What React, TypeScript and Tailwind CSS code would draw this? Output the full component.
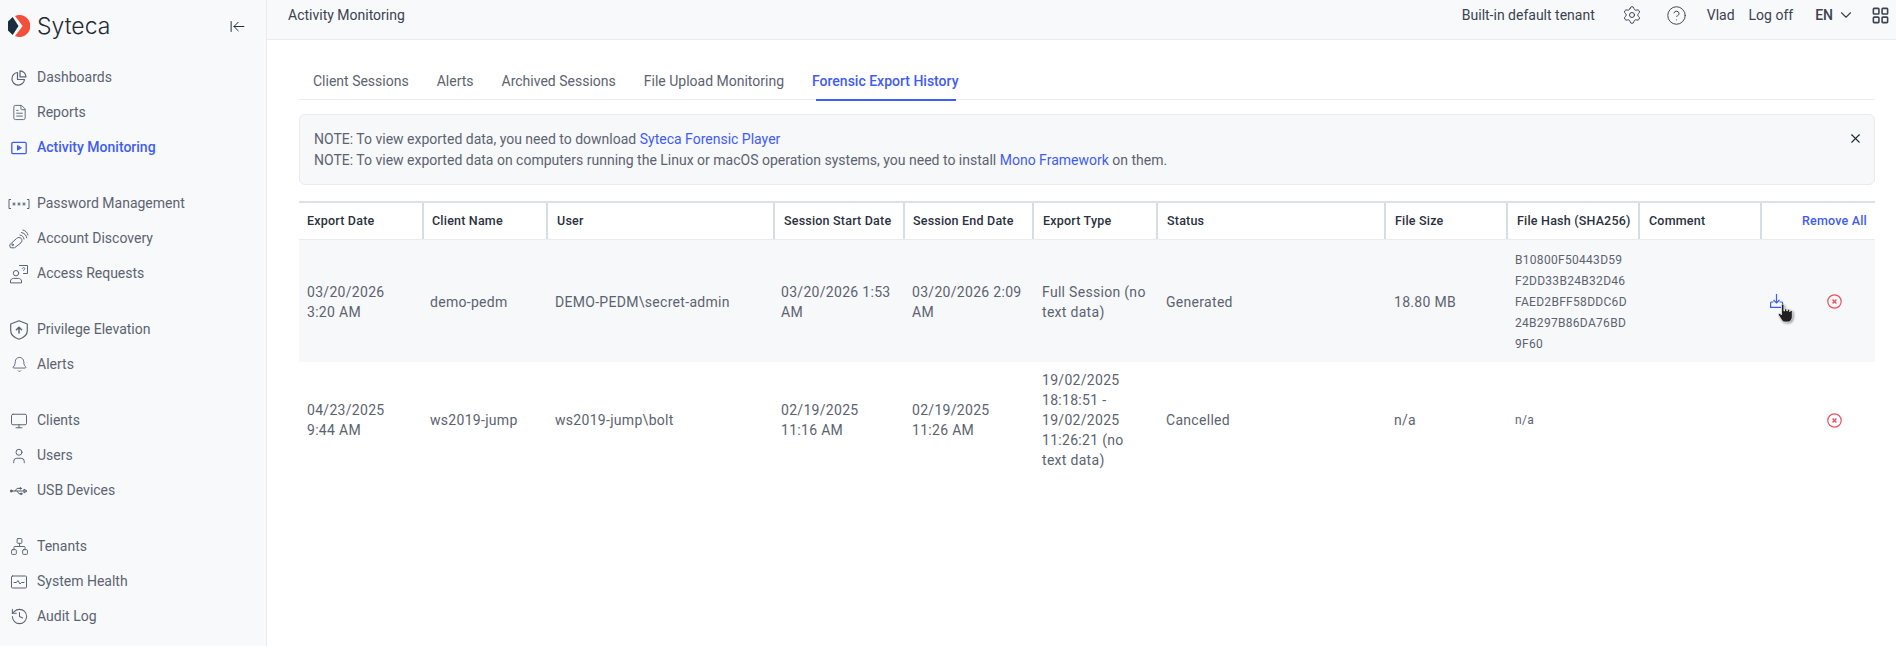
import {
  ArrowLeftToLine,
  Bell,
  ChevronDown,
  CircleHelp,
  FileText,
  History,
  LayoutGrid,
  Monitor,
  Network,
  Settings,
  User,
  X,
} from "lucide-react";
import type { ReactNode } from "react";

const FONT = "font-['Roboto',sans-serif]";

function Svg({ children }: { children: ReactNode }) {
  return (
    <svg width="20" height="20" viewBox="0 0 20 20" fill="none" stroke="currentColor" strokeWidth="1" strokeLinecap="round" strokeLinejoin="round">
      {children}
    </svg>
  );
}

const PieIcon = () => (
  <Svg>
    <path d="M8.500 4.500a6.300 6.300 0 1 0 7 7h-7z" strokeWidth="1.200" />
    <path d="M11 2.800a6.300 6.300 0 0 1 6 6h-6z" strokeWidth="1.200" />
  </Svg>
);

const PlayBox = () => (
  <Svg>
    <rect x="2.800" y="4.400" width="14.400" height="11.200" rx="1.200" strokeWidth="1.300" />
    <path d="M8.500 7.800v4.400l3.600-2.200z" fill="currentColor" />
  </Svg>
);

const PasswordIcon = () => (
  <svg width="22" height="20" viewBox="0 0 22 20" fill="none" stroke="currentColor" strokeWidth="1">
    <path d="M3 5.500H1v9h2M19 5.500h2v9h-2" />
    <path d="M6 8.300v3.400M4.500 9.100l3 1.800M7.500 9.100l-3 1.800M11 8.300v3.400M9.500 9.100l3 1.800M12.500 9.100l-3 1.800M16 8.300v3.400M14.500 9.100l3 1.800M17.500 9.100l-3 1.800" strokeWidth="0.850" />
  </svg>
);

const KeySignal = () => (
  <Svg>
    <path d="M1 15.500L7.500 9.500c1.300-1.300 3.500-1.300 4.700-.1 1.100 1.200 1 3.200-.2 4.400l-6.500 5H2a1 1 0 0 1-1-1z" />
    <circle cx="3.600" cy="15.800" r=".8" />
    <path d="M11 6c2 .2 3.800 2 4 4M12.500 3.500c2.500.3 5 2.800 5.300 5.300M14 1c2.500.6 4.500 2.600 5 5" />
  </Svg>
);

const AccessRequest = () => (
  <Svg>
    <circle cx="7" cy="9.200" r="2.700" />
    <path d="M1.500 18.500v-1.500c0-1.500 1.500-2.600 3-2.600h5c1.500 0 3 1.100 3 2.600v1.500z" />
    <path d="M10.500 1.500h8v8h-4" />
    <path d="M13.300 4.300c.2-.9 2.500-1 2.500.3 0 1-1.300 1-1.300 2" strokeWidth="0.900" />
  </Svg>
);

const ShieldUp = () => (
  <Svg>
    <path d="M10 .800l8.300 3.200v6.500c0 4-3.800 7.300-8.300 8.700-4.500-1.400-8.300-4.700-8.300-8.700V4z" strokeWidth="1.200" />
    <path d="M10 13V7.200M7.400 9.700L10 7.200l2.600 2.500" strokeWidth="1.500" />
  </Svg>
);

const HealthBox = () => (
  <Svg>
    <rect x="2.500" y="4" width="15" height="12" rx="1" />
    <path d="M5 10.500h2.500l1.500-2 2 3.500 1.500-1.500H15" />
  </Svg>
);

const UsbIcon = () => (
  <Svg>
    <circle cx="2.300" cy="10" r="1" fill="currentColor" />
    <path d="M3 10h14M15.300 8.300L18 10l-2.700 1.700z" />
    <path d="M6 10l2-2.600h2.500M8 10l2 2.800h1.500" />
    <circle cx="11.500" cy="7.400" r=".8" fill="currentColor" />
    <circle cx="12.200" cy="12.800" r=".8" fill="currentColor" />
  </Svg>
);

const Ic = ({ children }: { children: ReactNode }) => <span className="flex w-[22px] shrink-0 justify-center">{children}</span>;

const groups: { label: string; icon: ReactNode; active?: boolean }[][] = [
  [
    { label: "Dashboards", icon: <PieIcon /> },
    { label: "Reports", icon: <FileText size={17} strokeWidth={1.3} /> },
    { label: "Activity Monitoring", icon: <PlayBox />, active: true },
  ],
  [
    { label: "Password Management", icon: <PasswordIcon /> },
    { label: "Account Discovery", icon: <KeySignal /> },
    { label: "Access Requests", icon: <AccessRequest /> },
  ],
  [
    { label: "Privilege Elevation", icon: <ShieldUp /> },
    { label: "Alerts", icon: <Bell size={17} strokeWidth={1.3} /> },
  ],
  [
    { label: "Clients", icon: <Monitor size={18} strokeWidth={1.3} /> },
    { label: "Users", icon: <User size={18} strokeWidth={1.3} /> },
    { label: "USB Devices", icon: <UsbIcon /> },
  ],
  [
    { label: "Tenants", icon: <Network size={19} strokeWidth={1.2} /> },
    { label: "System Health", icon: <HealthBox /> },
    { label: "Audit Log", icon: <History size={19} strokeWidth={1.3} /> },
  ],
];

function Sidebar() {
  return (
    <aside className="flex h-[646px] w-[267px] shrink-0 flex-col overflow-hidden border-r border-[#e9ebef] bg-[#f8f9fb]">
      <div className="flex h-[52px] items-center pl-[8px] pr-[20px]">
        <svg width="22" height="22" viewBox="0 0 22 22">
          <path d="M4.700 2L0 6.500v9L4.700 20l5.800-9z" fill="#1b2e40" />
          <path d="M7 .900A11 11 0 1 1 7 21.100L14.700 11z" fill="#f2503b" />
        </svg>
        <span className="ml-[7px] font-['Inter',sans-serif] text-[23px] font-light leading-none text-[#1f2a37]">Syteca</span>
        <ArrowLeftToLine size={17} strokeWidth={1.4} className="ml-auto text-[#1f2a37]" />
      </div>
      <nav className="mt-[8px] flex flex-col gap-[21px]">
        {groups.map((g, i) => (
          <ul key={i}>
            {g.map((it) => (
              <li
                key={it.label}
                className={`flex h-[35px] items-center gap-[7px] pl-[8px] text-[14px] ${it.active ? "font-medium text-[#3f5cf6]" : "text-[#5c6370]"}`}
              >
                <Ic>{it.icon}</Ic>
                {it.label}
              </li>
            ))}
          </ul>
        ))}
      </nav>
    </aside>
  );
}

function TopBar() {
  return (
    <header className="flex h-[40px] items-center border-b border-[#e9ebef] bg-[#f8f9fb] pb-[9px] pl-[21px] pr-[6px] text-[14px] text-[#3b4250]">
      <span>Activity Monitoring</span>
      <span className="ml-auto">Built-in default tenant</span>
      <Settings size={20} strokeWidth={1.2} className="ml-[27px]" />
      <CircleHelp size={21} strokeWidth={1.1} className="ml-[24px]" />
      <span className="ml-[20px]">Vlad</span>
      <span className="ml-[14px]">Log off</span>
      <span className="ml-[22px] font-medium">EN</span>
      <ChevronDown size={18} strokeWidth={1.5} className="ml-[4px]" />
      <LayoutGrid size={19} strokeWidth={2} className="ml-[16px]" />
    </header>
  );
}

const tabs = ["Client Sessions", "Alerts", "Archived Sessions", "File Upload Monitoring", "Forensic Export History"];

function Tabs() {
  return (
    <div className="flex h-[40px] items-start gap-[28px] border-b border-[#e9ebef] pl-[14px] text-[14px]">
      {tabs.map((t, i) => (
        <div key={t} className={`relative pt-[11px] ${i === 4 ? "font-medium text-[#3f5cf6]" : "text-[#5c6370]"}`}>
          {t}
          {i === 4 && <span className="absolute -bottom-[9px] left-[4px] right-[3px] h-[2px] bg-[#3f5cf6]" />}
        </div>
      ))}
    </div>
  );
}

function Note() {
  return (
    <div className="relative mt-[14px] h-[71px] rounded-[6px] border border-[#e9ebef] bg-[#f7f8fa] pl-[14px] pt-[14px] text-[14px] leading-[21px] text-[#5c6370]">
      <p>
        NOTE: To view exported data, you need to download <span className="text-[#3f5cf6]">Syteca Forensic Player</span>
      </p>
      <p>
        NOTE: To view exported data on computers running the Linux or macOS operation systems, you need to install{" "}
        <span className="text-[#3f5cf6]">Mono Framework</span> on them.
      </p>
      <X size={15} strokeWidth={1.8} className="absolute right-[11px] top-[16px] text-[#1f2a37]" />
    </div>
  );
}

const COLS = "grid grid-cols-[125px_124px_227px_130px_129px_124px_228px_122px_132px_122px_113px]";

const headers: [string, string][] = [
  ["Export Date", "pl-[8px]"],
  ["Client Name", "pl-[8px]"],
  ["User", "pl-[9px]"],
  ["Session Start Date", "pl-[9px]"],
  ["Session End Date", "pl-[8px]"],
  ["Export Type", "pl-[9px]"],
  ["Status", "pl-[9px]"],
  ["File Size", "pl-[9px]"],
  ["File Hash (SHA256)", "pl-[9px]"],
  ["Comment", "pl-[9px]"],
];

const cellPad = ["pl-[8px]", "pl-[6px]", "pl-[7px]", "pl-[6px]", "pl-[7px]", "pl-[8px]", "pl-[8px]", "pl-[8px]", "pl-[7px]"];

const rows = [
  {
    bg: "h-[122px] bg-[#f7f8fa]",
    shift: "pt-[2px]",
    cells: [
      "03/20/2026 3:20 AM",
      "demo-pedm",
      "DEMO-PEDM\\secret-admin",
      "03/20/2026 1:53 AM",
      "03/20/2026 2:09 AM",
      "Full Session (no text data)",
      "Generated",
      "18.80 MB",
      "B10800F50443D59F2DD33B24B32D46FAED2BFF58DDC6D24B297B86DA76BD9F60",
    ],
    download: true,
  },
  {
    bg: "h-[116px]",
    shift: "",
    cells: [
      "04/23/2025 9:44 AM",
      "ws2019-jump",
      "ws2019-jump\\bolt",
      "02/19/2025 11:16 AM",
      "02/19/2025 11:26 AM",
      "19/02/2025 18:18:51 - 19/02/2025 11:26:21 (no text data)",
      "Cancelled",
      "n/a",
      "n/a",
    ],
    download: false,
  },
];

const DangerX = () => (
  <svg width="15" height="15" viewBox="0 0 15 15" fill="none" stroke="#ef4f5e" strokeWidth="1.200">
    <circle cx="7.500" cy="7.500" r="6.700" />
    <path d="M5.600 5.600l3.800 3.800M9.400 5.600l-3.800 3.800" strokeWidth="1.400" />
  </svg>
);

const DownloadIcon = () => (
  <svg width="14" height="14" viewBox="0 0 14 14" fill="none" stroke="#3f5cf6" strokeWidth="1.200">
    <path d="M6.500 0v9M3.500 6l3 3 3-3" />
    <path d="M3.500 8H1.200L.6 9v4.400h12V9l-.6-1H9.500" />
  </svg>
);

const HandCursor = () => (
  <svg width="17" height="19" viewBox="0 0 17 19" className="absolute left-[8px] top-[10px] drop-shadow-[1px_1px_1px_rgba(0,0,0,0.4)]">
    <path
      d="M3.500 1.300a1.200 1.200 0 0 1 2.400 0V7h.7V5.800a1.100 1.100 0 0 1 2.200 0V7h.6V6.300a1.100 1.100 0 0 1 2.200 0V7.500h.5a1.100 1.100 0 0 1 2.200 0V12.500c0 3-1.800 5.500-4.200 5.500H7c-1.700 0-2.700-.9-3.500-2.300L.7 11.300c-.9-1.400.7-2.500 1.800-1.400l1 1z"
      fill="#1f1f1f"
      stroke="#fff"
      strokeWidth="0.700"
    />
  </svg>
);

function Actions({ download }: { download?: boolean }) {
  return (
    <div className="flex items-center pl-[8px]">
      <span className="relative flex w-[47px] justify-start">
        {download && (
          <>
            <DownloadIcon />
            <HandCursor />
          </>
        )}
      </span>
      <span className="ml-[10px]">
        <DangerX />
      </span>
    </div>
  );
}

function ExportTable() {
  return (
    <div className="mt-[16px] text-[14px] tracking-[0.3px] text-[#5c6370]">
      <div className={`${COLS} h-[39px] border-y-2 border-b border-y-[#dde0e6] border-b-[#e9ebef] text-[12.5px] font-medium tracking-[0.2px] text-[#2a3140]`}>
        {headers.map(([h, pad]) => (
          <div key={h} className={`flex items-center border-r-2 border-[#d8dce3] ${pad}`}>
            {h}
          </div>
        ))}
        <div className="flex items-center justify-end pr-[8px] text-[#3f5cf6]">Remove All</div>
      </div>

      {rows.map((r) => (
        <div key={r.cells[0]} className={`${COLS} ${r.bg} leading-[20px]`}>
          {r.cells.map((c, i) => (
            <div
              key={i}
              className={`flex items-center pr-[12px] ${cellPad[i]} ${r.shift} ${i === 8 ? "break-all text-[12px] leading-[21px]" : ""}`}
            >
              {c}
            </div>
          ))}
          <div />
          <Actions download={r.download} />
        </div>
      ))}
    </div>
  );
}

export default function App() {
  return (
    <div className={`flex h-[646px] w-[1896px] overflow-hidden bg-white ${FONT}`}>
      <Sidebar />
      <main className="min-w-0 flex-1">
        <TopBar />
        <div className="ml-[32px] mr-[21px] pt-[20px]">
          <Tabs />
          <Note />
          <ExportTable />
        </div>
      </main>
    </div>
  );
}
